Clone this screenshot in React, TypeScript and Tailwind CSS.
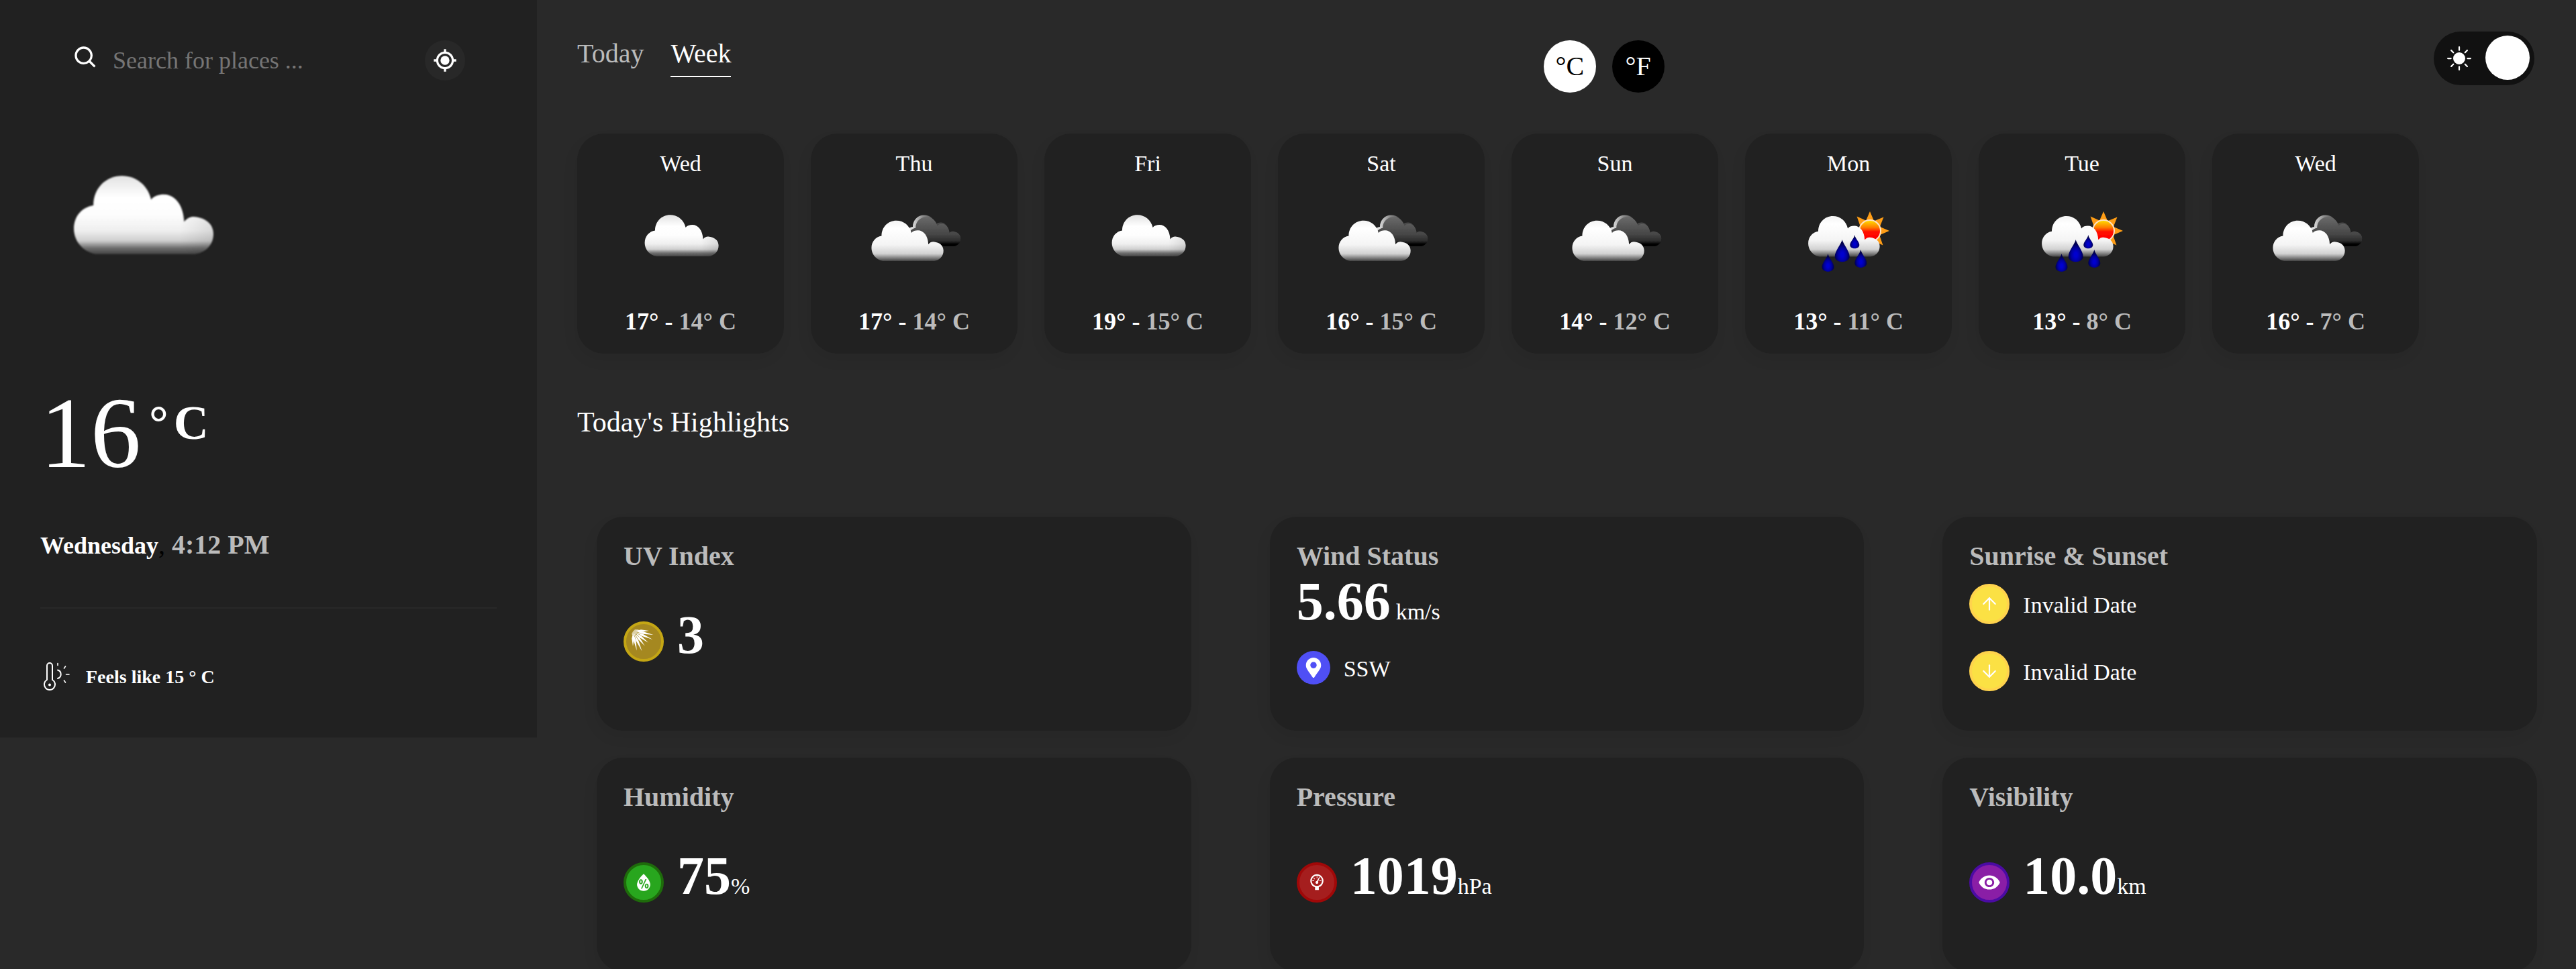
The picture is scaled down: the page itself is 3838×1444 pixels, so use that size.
import React, { useId, useState } from "react";
import { ArrowDown, ArrowUp } from "lucide-react";
import { BsSunFill } from "react-icons/bs";
import { BiCurrentLocation, BiSearch } from "react-icons/bi";
import { WiBarometer, WiHumidity } from "react-icons/wi";
import { FaMapMarkerAlt } from "react-icons/fa";
import { IoMdEye } from "react-icons/io";

const CLOUD =
  "M64 121 C53 119 46.6 110 46.6 101 C46.6 91 53 84 62 82.5 C62 69 72 59.3 84.5 59.3 C96 59.3 105 67 107.5 78 C110 75 113.5 74 117.5 74 C126 74 133 82 133.5 95.5 C136 92.5 138 91.5 141 91.5 C150 92 156.6 97 156.6 105 C156.6 114 150 120 142 121 Z";

function CloudDefs({ id }: { id: string }) {
  return (
    <defs>
      <linearGradient id={`${id}w`} gradientUnits="userSpaceOnUse" x1="0" y1="59" x2="0" y2="121">
        <stop offset="0" stopColor="#e2e2e2" />
        <stop offset="0.28" stopColor="#ffffff" />
        <stop offset="0.5" stopColor="#fdfdfd" />
        <stop offset="0.7" stopColor="#efefef" />
        <stop offset="0.83" stopColor="#cfcfcf" />
        <stop offset="0.92" stopColor="#707070" />
        <stop offset="1" stopColor="#444444" />
      </linearGradient>
      <linearGradient id={`${id}p`} gradientUnits="userSpaceOnUse" x1="0" y1="59" x2="0" y2="121">
        <stop offset="0" stopColor="#f4f4f4" />
        <stop offset="0.2" stopColor="#ffffff" />
        <stop offset="0.6" stopColor="#f4f4f4" />
        <stop offset="0.82" stopColor="#d2d2d2" />
        <stop offset="0.95" stopColor="#6c6c6c" />
        <stop offset="1" stopColor="#444444" />
      </linearGradient>
      <linearGradient id={`${id}r`} gradientUnits="userSpaceOnUse" x1="130" y1="0" x2="157" y2="0">
        <stop offset="0" stopColor="#000" stopOpacity="0" />
        <stop offset="1" stopColor="#000" stopOpacity="0.1" />
      </linearGradient>
      <linearGradient id={`${id}d`} gradientUnits="userSpaceOnUse" x1="0" y1="59" x2="0" y2="121">
        <stop offset="0" stopColor="#6a6a6a" />
        <stop offset="0.6" stopColor="#464646" />
        <stop offset="0.82" stopColor="#2c2c2c" />
        <stop offset="0.93" stopColor="#000000" />
        <stop offset="1" stopColor="#000000" />
      </linearGradient>
      <linearGradient id={`${id}l`} gradientUnits="userSpaceOnUse" x1="60" y1="0" x2="105" y2="0">
        <stop offset="0" stopColor="#e0e0e0" />
        <stop offset="0.5" stopColor="#8a8a8a" />
        <stop offset="1" stopColor="#484848" />
      </linearGradient>
      <linearGradient id={`${id}s`} x1="0" y1="0" x2="0" y2="1">
        <stop offset="0.05" stopColor="#ffd400" />
        <stop offset="0.35" stopColor="#ff7a00" />
        <stop offset="0.55" stopColor="#ff0a00" />
        <stop offset="1" stopColor="#ff0000" />
      </linearGradient>
      <radialGradient id={`${id}b`} cx="0.5" cy="0.68" r="0.5">
        <stop offset="0.2" stopColor="#0000cf" />
        <stop offset="0.6" stopColor="#0000a0" />
        <stop offset="1" stopColor="#00004c" />
      </radialGradient>
      <filter id={`${id}f`} x="-5%" y="-5%" width="110%" height="110%">
        <feGaussianBlur stdDeviation="0.6" />
      </filter>
    </defs>
  );
}

function drop(x: number, top: number, bottom: number, half: number) {
  const mid = bottom - half;
  return `M${x} ${top} C${x + 1} ${top + 6} ${x + half} ${mid - half * 0.7} ${x + half} ${mid} C${x + half} ${bottom} ${x - half} ${bottom} ${x - half} ${mid} C${x - half} ${mid - half * 0.7} ${x - 1} ${top + 6} ${x} ${top} Z`;
}

type Sky = "cloud" | "clouds" | "rain";

function SkyIcon({ kind, className }: { kind: Sky; className: string }) {
  const id = useId().replace(/[^a-zA-Z0-9]/g, "");
  return (
    <svg viewBox="0 0 200 200" className={className} role="img" aria-label={kind}>
      <CloudDefs id={id} />
      <g filter={`url(#${id}f)`}>
        {kind === "cloud" && (
          <g>
            <path d={CLOUD} fill={`url(#${id}w)`} />
            <path d={CLOUD} fill={`url(#${id}r)`} />
          </g>
        )}
        {kind === "clouds" && (
          <g>
            <g transform="translate(51.5 15) scale(0.75)">
              <path d={CLOUD} fill={`url(#${id}l)`} />
              <path d={CLOUD} fill={`url(#${id}d)`} transform="translate(9 7) scale(0.945)" />
            </g>
            <g transform="translate(-9 10) scale(0.975)">
              <path d={CLOUD} fill={`url(#${id}p)`} />
            </g>
          </g>
        )}
        {kind === "rain" && (
          <g>
            <g transform="translate(132 83)" fill="#ff9d14">
              {[-132, -90, -45, 0, 48].map((a) => (
                <path key={a} d="M15 -6 L29 0 L15 6 Z" transform={`rotate(${a})`} />
              ))}
            </g>
            <circle cx="132" cy="83" r="16" fill={`url(#${id}s)`} stroke="#ffe3c4" strokeWidth="2" />
            <g transform="translate(-5 3) scale(0.968 0.98)">
              <path d={CLOUD} fill={`url(#${id}p)`} />
            </g>
            <g fill={`url(#${id}b)`}>
              <path d={drop(90.7, 96, 132, 11)} />
              <path d={drop(109.3, 89, 111, 7)} />
              <path d={drop(69.5, 117, 146, 9)} />
              <path d={drop(118.3, 111, 140, 9)} />
            </g>
          </g>
        )}
      </g>
    </svg>
  );
}

function FeelsIcon() {
  return (
    <svg
      viewBox="0 0 44 44"
      className="size-11 shrink-0"
      fill="none"
      stroke="#fff"
      strokeWidth="2"
      strokeLinecap="round"
      aria-hidden="true"
    >
      <path d="M10 26 V5 a4 4 0 0 1 8 0 V26 A8 8 0 1 1 10 26 Z" />
      <circle cx="14" cy="33.5" r="1" fill="#fff" />
      <path d="M26 11.5 A6.5 6.5 0 0 1 26 24" />
      <path d="M26 1.5 V4.5 M35.5 9 L37.5 6 M38.5 18 H43 M35.5 27 L37.5 30" strokeWidth="1.6" />
    </svg>
  );
}

const RAYS = [
  [0, 24],
  [11, 31],
  [24, 32],
  [38, 29],
  [52, 29],
  [66, 33],
  [79, 30],
  [90, 23],
];

function UvIcon() {
  return (
    <svg viewBox="4 4 52 52" className="size-full" fill="#fff" aria-hidden="true">
      <g transform="translate(14 14)">
        {RAYS.map(([angle, len]) => (
          <path
            key={angle}
            d={`M4 0 L${len * 0.5} -1.7 L${len} 0 L${len * 0.5} 1.7 Z`}
            transform={`rotate(${angle})`}
          />
        ))}
        <path d="M-2 5 L0 1 L3 -2 H9 L5 2 L2 8 Z" fillOpacity="0.6" />
      </g>
    </svg>
  );
}

const DAYS: { day: string; sky: Sky; max: number; min: number }[] = [
  { day: "Wed", sky: "cloud", max: 17, min: 14 },
  { day: "Thu", sky: "clouds", max: 17, min: 14 },
  { day: "Fri", sky: "cloud", max: 19, min: 15 },
  { day: "Sat", sky: "clouds", max: 16, min: 15 },
  { day: "Sun", sky: "clouds", max: 14, min: 12 },
  { day: "Mon", sky: "rain", max: 13, min: 11 },
  { day: "Tue", sky: "rain", max: 13, min: 8 },
  { day: "Wed", sky: "clouds", max: 16, min: 7 },
];

function Card({ title, children }: { title: string; children: React.ReactNode }) {
  return (
    <article className="min-h-[319px] rounded-[40px] bg-[#212121] p-10 shadow-[-4px_10px_20px_rgba(0,0,0,0.06)]">
      <h3 className="text-[40px] leading-[38px] font-bold text-[#bbbbbb]">{title}</h3>
      {children}
    </article>
  );
}

function Badge({ className, children }: { className: string; children: React.ReactNode }) {
  return (
    <span className={`flex size-[60px] shrink-0 items-center justify-center rounded-full text-white ${className}`}>
      {children}
    </span>
  );
}

function Reading({ badge, value, unit }: { badge: React.ReactNode; value: string; unit?: string }) {
  return (
    <div className="mt-[58px] flex items-end gap-5">
      {badge}
      <p className="flex items-baseline text-[34px] leading-10">
        <strong className="text-[80px] leading-20">{value}</strong>
        {unit}
      </p>
    </div>
  );
}

function Sidebar() {
  return (
    <aside className="w-[800px] shrink-0 self-start bg-[#212121] px-[60px] pt-[60px] pb-[68px]">
      <form className="flex items-center pr-[47px] pl-12" onSubmit={(e) => e.preventDefault()}>
        <BiSearch className="mb-2 size-10 shrink-0" aria-hidden="true" />
        <input
          type="text"
          aria-label="Search for places"
          placeholder="Search for places ..."
          className="ml-5 h-[60px] min-w-0 flex-1 bg-transparent text-[36px] text-white outline-none placeholder:text-[#757575]"
        />
        <button
          type="button"
          aria-label="Use current location"
          className="flex size-[60px] shrink-0 items-center justify-center rounded-full bg-[#282828]"
        >
          <BiCurrentLocation className="size-10" />
        </button>
      </form>
      <SkyIcon kind="cloud" className="mt-[30px] -ml-[38px] size-[378px]" />
      <p className="mt-[42px] flex items-start text-[150px] leading-[150px]">
        16
        <span className="mt-6 ml-3 flex gap-2 text-[72px] leading-[72px] font-bold">
          <span>°</span>
          <span>C</span>
        </span>
      </p>
      <p className="mt-[70px] text-[40px] leading-11 text-black">
        <strong className="text-[36px] text-white">Wednesday</strong>,{" "}
        <strong className="text-[#bbbbbb]">4:12 PM</strong>
      </p>
      <hr className="mt-[70px] border-t-2 border-[#282828]" />
      <div className="mt-20 flex items-center gap-6">
        <FeelsIcon />
        <p className="text-[28px] leading-8 font-bold">Feels like 15 ° C</p>
      </div>
    </aside>
  );
}

export default function App() {
  const [unit, setUnit] = useState("C");
  const [dark, setDark] = useState(true);
  return (
    <div className="flex h-screen overflow-hidden bg-[#292929] font-['Liberation_Serif',serif] text-white">
      <Sidebar />
      <main className="min-w-0 flex-1">
        <header className="flex h-[127px] items-start justify-between pt-[47px] pr-[62px] pl-[60px]">
          <nav className="flex gap-10 pt-2.5 text-[40px] leading-[46px]">
            <a href="#today" className="text-[#bbbbbb]">
              Today
            </a>
            <a href="#week" aria-current="page" className="border-b-2 border-white pb-2.5">
              Week
            </a>
          </nav>
          <div className="ml-16 flex gap-6 pt-[13px] text-[40px] leading-none">
            <button
              type="button"
              aria-pressed={unit === "C"}
              onClick={() => setUnit("C")}
              className="size-[78px] rounded-full bg-white text-black"
            >
              °C
            </button>
            <button
              type="button"
              aria-pressed={unit === "F"}
              onClick={() => setUnit("F")}
              className="size-[78px] rounded-full bg-black text-white"
            >
              °F
            </button>
          </div>
          <button
            type="button"
            role="switch"
            aria-checked={dark}
            aria-label="Dark mode"
            onClick={() => setDark(!dark)}
            className="flex h-20 w-[150px] items-center justify-between rounded-[40px] bg-[#111111] pr-[7px] pl-5"
          >
            <BsSunFill className="size-9" />
            <span className="mb-0.5 size-[66px] rounded-full bg-white" />
          </button>
        </header>

        <section aria-label="Week forecast" className="mt-[72px] grid w-[92.3%] grid-cols-8 gap-10 pl-[60px]">
          {DAYS.map((d, i) => (
            <article
              key={i}
              className="flex flex-col items-center rounded-[40px] bg-[#212121] pt-7 pb-[30px] shadow-[-4px_10px_20px_rgba(0,0,0,0.06)]"
            >
              <h3 className="text-[34px] leading-[34px]">{d.day}</h3>
              <SkyIcon kind={d.sky} className="size-[200px]" />
              <p className="text-[36px] leading-9 font-bold whitespace-nowrap">
                {d.max}° - <span className="text-[#bbbbbb]">{d.min}° C</span>
              </p>
            </article>
          ))}
        </section>

        <section>
          <h2 className="mt-[79px] pl-[60px] text-[42px] leading-[46px]">Today's Highlights</h2>
          <div className="mt-[118px] grid grid-cols-3 gap-x-[117px] gap-y-10 pr-[58px] pl-[89px]">
            <Card title="UV Index">
              <Reading
                value="3"
                badge={
                  <Badge className="border-4 border-[#c4a614] bg-[#a58820]">
                    <UvIcon />
                  </Badge>
                }
              />
            </Card>
            <Card title="Wind Status">
              <p className="mt-2 flex items-baseline gap-2 text-[34px] leading-10">
                <strong className="text-[80px] leading-20">5.66</strong>
                km/s
              </p>
              <div className="mt-[34px] flex items-center gap-5">
                <span className="flex size-[50px] items-center justify-center rounded-full bg-[#4f4ff5]">
                  <FaMapMarkerAlt className="size-[30px]" />
                </span>
                <p className="pt-1 text-[34px] leading-10">SSW</p>
              </div>
            </Card>
            <Card title="Sunrise &amp; Sunset">
              <div className="mt-[22px] flex items-center gap-5">
                <Badge className="border-4 border-[#ffd34d] bg-[#fbe144]">
                  <ArrowUp className="size-[30px]" strokeWidth={1.75} />
                </Badge>
                <p className="pt-1 text-[34px] leading-10">Invalid Date</p>
              </div>
              <div className="mt-10 flex items-center gap-5">
                <Badge className="border-4 border-[#ffd34d] bg-[#fbe144]">
                  <ArrowDown className="size-[30px]" strokeWidth={1.75} />
                </Badge>
                <p className="pt-1 text-[34px] leading-10">Invalid Date</p>
              </div>
            </Card>
            <Card title="Humidity">
              <Reading
                value="75"
                unit="%"
                badge={
                  <Badge className="border-4 border-[#1e6b0b] bg-[#28a61e]">
                    <WiHumidity className="size-10" />
                  </Badge>
                }
              />
            </Card>
            <Card title="Pressure">
              <Reading
                value="1019"
                unit="hPa"
                badge={
                  <Badge className="border-4 border-[#a00808] bg-[#a51e1e]">
                    <WiBarometer className="size-10" />
                  </Badge>
                }
              />
            </Card>
            <Card title="Visibility">
              <Reading
                value="10.0"
                unit="km"
                badge={
                  <Badge className="border-4 border-[#4b0ba3] bg-[#8a1ea6]">
                    <IoMdEye className="size-9" />
                  </Badge>
                }
              />
            </Card>
          </div>
        </section>
      </main>
    </div>
  );
}
